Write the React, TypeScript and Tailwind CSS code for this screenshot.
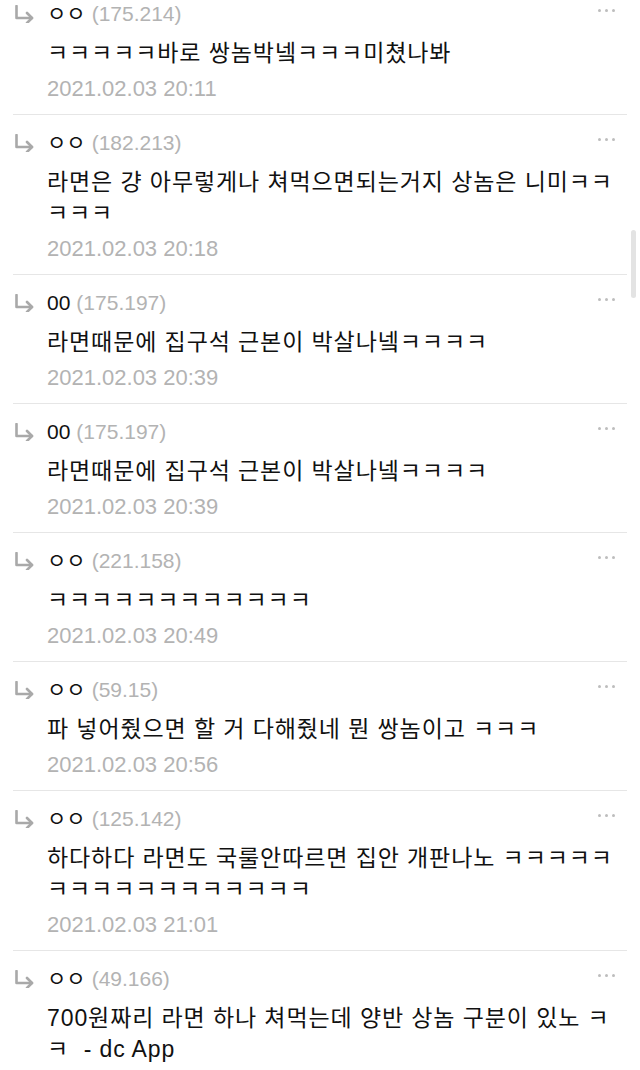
import React from "react"

type Comment = {
  name: string
  ip: string
  lines: string[]
  date: string
}

const comments: Comment[] = [
  { name: "ㅇㅇ", ip: "(175.214)", lines: ["ㅋㅋㅋㅋㅋ바로 쌍놈박넼ㅋㅋㅋ미쳤나봐"], date: "2021.02.03 20:11" },
  {
    name: "ㅇㅇ",
    ip: "(182.213)",
    lines: ["라면은 걍 아무렇게나 쳐먹으면되는거지 상놈은 니미ㅋㅋ", "ㅋㅋㅋ"],
    date: "2021.02.03 20:18",
  },
  { name: "00", ip: "(175.197)", lines: ["라면때문에 집구석 근본이 박살나넼ㅋㅋㅋㅋ"], date: "2021.02.03 20:39" },
  { name: "00", ip: "(175.197)", lines: ["라면때문에 집구석 근본이 박살나넼ㅋㅋㅋㅋ"], date: "2021.02.03 20:39" },
  { name: "ㅇㅇ", ip: "(221.158)", lines: ["ㅋㅋㅋㅋㅋㅋㅋㅋㅋㅋㅋㅋ"], date: "2021.02.03 20:49" },
  { name: "ㅇㅇ", ip: "(59.15)", lines: ["파 넣어줬으면 할 거 다해줬네 뭔 쌍놈이고 ㅋㅋㅋ"], date: "2021.02.03 20:56" },
  {
    name: "ㅇㅇ",
    ip: "(125.142)",
    lines: ["하다하다 라면도 국룰안따르면 집안 개판나노 ㅋㅋㅋㅋㅋ", "ㅋㅋㅋㅋㅋㅋㅋㅋㅋㅋㅋㅋ"],
    date: "2021.02.03 21:01",
  },
  {
    name: "ㅇㅇ",
    ip: "(49.166)",
    lines: ["700원짜리 라면 하나 쳐먹는데 양반 상놈 구분이 있노 ㅋ", "ㅋ  - dc App"],
    date: "",
  },
]

function ReplyArrow() {
  return (
    <svg width="21" height="18" viewBox="0 0 21 18" fill="none" className="shrink-0">
      <path d="M2.5 1 V13 H18" stroke="#a9a9a9" strokeWidth="2.6" strokeLinecap="round" strokeLinejoin="round" />
      <path d="M13 8 L18 13 L13 18" stroke="#a9a9a9" strokeWidth="2.6" strokeLinecap="round" strokeLinejoin="round" />
    </svg>
  )
}

function MoreDots() {
  return (
    <div className="flex gap-[4px] pt-[2px]">
      <span className="h-[3px] w-[3px] rounded-full bg-[#bdbdbd]" />
      <span className="h-[3px] w-[3px] rounded-full bg-[#bdbdbd]" />
      <span className="h-[3px] w-[3px] rounded-full bg-[#bdbdbd]" />
    </div>
  )
}

function CommentItem({ c }: { c: Comment }) {
  return (
    <div className="border-b border-[#e6e6e6] pt-[13px] pb-[10px]">
      <div className="flex h-[30px] items-start justify-between pr-[12px]">
        <div className="flex h-[30px] items-center">
          <div className="w-[34px] pl-[1px]">
            <ReplyArrow />
          </div>
          <span className="text-[21px] text-[#111]">{c.name}</span>
          <span className="ml-[6px] text-[21px] text-[#b3b3b3]">{c.ip}</span>
        </div>
        <div className="pt-[8px]">
          <MoreDots />
        </div>
      </div>
      <div className="mt-[9px] pl-[34px] text-[23px] leading-[31px] tracking-[0.9px] text-[#111]">
        {c.lines.map((l, i) => (
          <div key={i} className="whitespace-pre">
            {l}
          </div>
        ))}
      </div>
      {c.date && (
        <div className="mt-[5px] pl-[34px] text-[22px] leading-[30px] text-[#b3b3b3]">{c.date}</div>
      )}
    </div>
  )
}

export default function App() {
  return (
    <div
      className="relative h-[1070px] w-[640px] overflow-hidden bg-white"
      style={{ fontFamily: '"Liberation Sans", "Noto Sans CJK KR", sans-serif' }}
    >
      <div className="-mt-[14px] px-[13px]">
        {comments.map((c, i) => (
          <CommentItem key={i} c={c} />
        ))}
      </div>
      <div className="absolute right-[4px] top-[230px] h-[68px] w-[5px] rounded-full bg-[#e3e3e3]" />
    </div>
  )
}
